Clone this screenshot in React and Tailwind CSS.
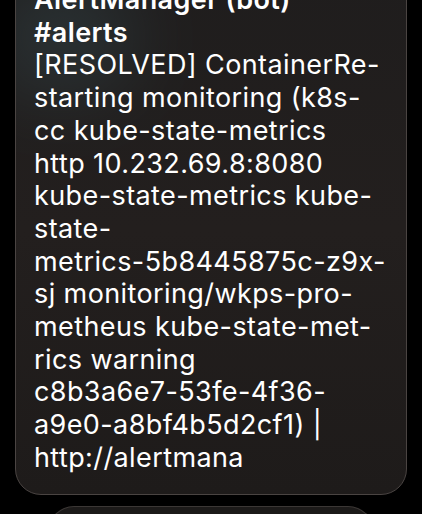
import React from 'react';

const lines = [
  'starting monitoring (k8s-',
  'cc kube-state-metrics',
  'http 10.232.69.8:8080',
  'kube-state-metrics kube-',
  'state-',
  'metrics-5b8445875c-z9x-',
  'sj monitoring/wkps-pro-',
  'metheus kube-state-met-',
  'rics warning',
  'c8b3a6e7-53fe-4f36-',
  'a9e0-a8bf4b5d2cf1) |',
  'http://alertmana',
];

const App = () => {
  return (
    <div className="w-[422px] h-[514px] bg-black overflow-hidden" style={{ fontFamily: 'Inter, "Noto Sans", sans-serif' }}>
      {/* Notification card */}
      <div className="relative mx-[15px] w-[392px] -mt-[34px] rounded-[26px] border border-[#4a4442] bg-gradient-to-b from-[#1f1d1d] via-[#231f1e] to-[#1e1b1a] overflow-hidden">
        <div className="absolute -left-[30px] top-[10px] w-[150px] h-[120px] rounded-full bg-[#3a5157] opacity-40 blur-2xl" />
        <div className="relative pl-[18px] pr-3 pt-[17px] pb-[19px] text-white text-[27px] leading-[32.7px] tracking-[0.4px]">
          <div className="font-semibold">AlertManager (bot)</div>
          <div className="font-semibold">#alerts</div>
          <div className="whitespace-nowrap">[RESOLVED] ContainerRe-</div>
          {lines.map((l, i) => (
            <div key={i} className="whitespace-nowrap">{l}</div>
          ))}
        </div>
      </div>

      {/* Next card peeking */}
      <div className="mx-[48px] mt-[11px] h-[40px] rounded-t-[26px] border-t border-x border-[#3b3735] bg-[#1c1a19]" />
    </div>
  );
};

export default App;
